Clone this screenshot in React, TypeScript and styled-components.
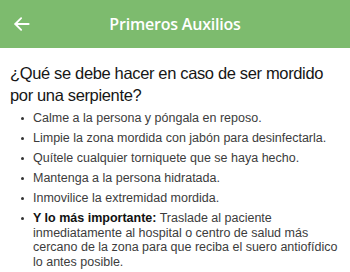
import React from "react";
import styled, { createGlobalStyle } from "styled-components";

const Global = createGlobalStyle`
  html, body { margin: 0; padding: 0; background: #ffffff; }
  body { font-family: "Liberation Sans", Arial, sans-serif; -webkit-font-smoothing: antialiased; }
`;

const Page = styled.div`
  width: 350px;
  height: 272px;
  overflow: hidden;
  background: #ffffff;
`;

const Header = styled.header`
  height: 48px;
  background: #7dbb6e;
  display: grid;
  grid-template-columns: 48px 1fr 48px;
  align-items: center;
`;

const BackButton = styled.button`
  border: 0;
  background: transparent;
  padding: 0 0 0 12px;
  display: flex;
  align-items: center;
  color: #ffffff;
  height: 100%;
`;

const Title = styled.h1`
  margin: 0;
  text-align: center;
  font-family: "Open Sans", sans-serif;
  font-weight: 600;
  font-size: 16px;
  color: #ffffff;
  letter-spacing: -0.2px;
`;

const Content = styled.main`
  padding: 14px 10px 0 10px;
`;

const Question = styled.h2`
  margin: 0 0 5px 0;
  font-family: "Liberation Sans", Arial, sans-serif;
  font-weight: 400;
  font-size: 16.5px;
  letter-spacing: -0.35px;
  line-height: 22px;
  color: #161616;
`;

const List = styled.ul`
  margin: 0;
  padding: 0;
  list-style: none;
  display: flex;
  flex-direction: column;
  gap: 5.5px;
`;

const Item = styled.li`
  display: grid;
  grid-template-columns: 23px 1fr;
  font-family: "Liberation Sans", Arial, sans-serif;
  font-size: 12.5px;
  line-height: 14.5px;
  color: #3c3c3c;
`;

const Dot = styled.span`
  display: flex;
  padding-top: 6px;
  padding-left: 11px;
  &::before {
    content: "";
    width: 3px;
    height: 3px;
    border-radius: 50%;
    background: #333;
  }
`;

const Strong = styled.b`
  font-weight: 700;
  color: #111;
`;

const items: React.ReactNode[] = [
  "Calme a la persona y póngala en reposo.",
  "Limpie la zona mordida con jabón para desinfectarla.",
  "Quítele cualquier torniquete que se haya hecho.",
  "Mantenga a la persona hidratada.",
  "Inmovilice la extremidad mordida.",
  <>
    <Strong>Y lo más importante:</Strong> Traslade al paciente inmediatamente
    al hospital o centro de salud más cercano de la zona para que reciba el
    suero antiofídico lo antes posible.
  </>,
];

export default function App() {
  return (
    <Page>
      <Global />
      <Header>
        <BackButton aria-label="Volver">
          <svg width="20" height="20" viewBox="0 0 24 24" fill="none" stroke="#fff" strokeWidth="2.2" strokeLinecap="round" strokeLinejoin="round">
            <path d="M20 12H4" />
            <path d="M11 5l-7 7 7 7" />
          </svg>
        </BackButton>
        <Title>Primeros Auxilios</Title>
        <span />
      </Header>
      <Content>
        <Question>¿Qué se debe hacer en caso de ser mordido por una serpiente?</Question>
        <List>
          {items.map((it, i) => (
            <Item key={i}>
              <Dot />
              <span>{it}</span>
            </Item>
          ))}
        </List>
      </Content>
    </Page>
  );
}
